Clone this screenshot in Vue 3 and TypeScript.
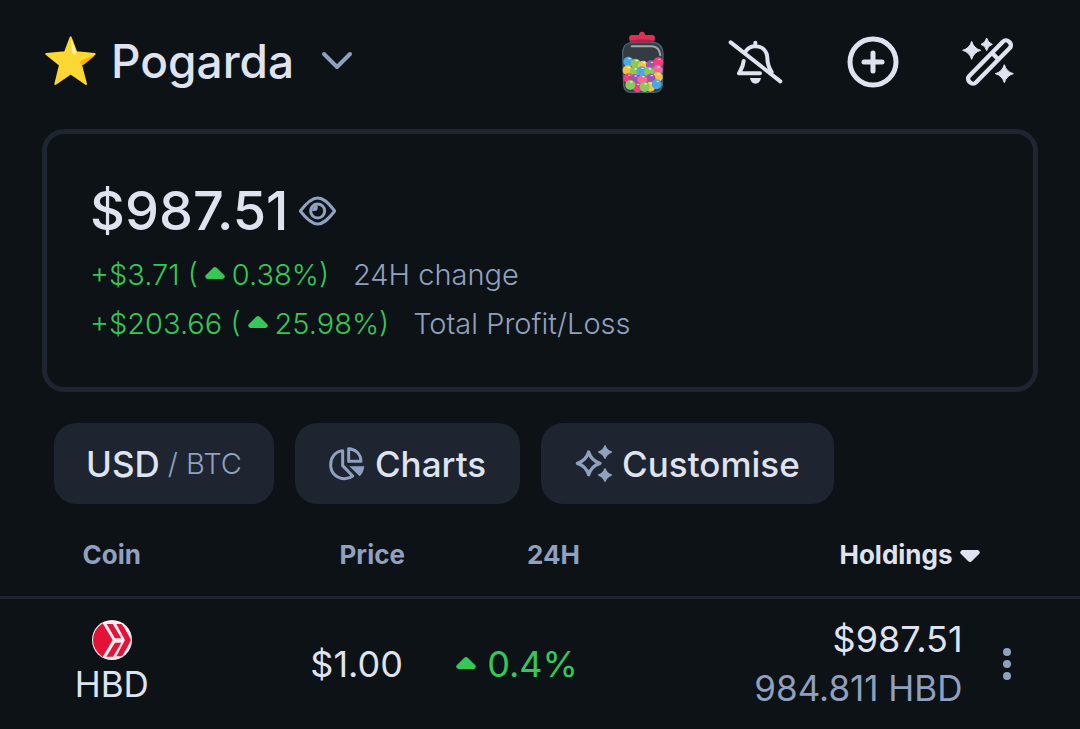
<script setup lang="ts">
import { ref } from 'vue'

interface Change { amount: string; percent: string; label: string }
interface Ball { x: number; y: number; c: string }

const changes: Change[] = [
  { amount: '+$3.71', percent: '0.38%', label: '24H change' },
  { amount: '+$203.66', percent: '25.98%', label: 'Total Profit/Loss' },
]

const balls: Ball[] = [
  { x: 88, y: 122, c: '#48a9e6' }, { x: 110, y: 128, c: '#8bc95a' }, { x: 132, y: 134, c: '#f6c445' },
  { x: 156, y: 133, c: '#9858b2' }, { x: 178, y: 124, c: '#ec4080' },
  { x: 86, y: 148, c: '#f6c445' }, { x: 107, y: 153, c: '#8bc95a' }, { x: 176, y: 147, c: '#f2699c' },
  { x: 128, y: 151, c: '#48a9e6' }, { x: 150, y: 153, c: '#8bc95a' },
  { x: 88, y: 172, c: '#ec4080' }, { x: 107, y: 174, c: '#9858b2' }, { x: 176, y: 168, c: '#f6c445' },
  { x: 155, y: 173, c: '#9858b2' }, { x: 130, y: 176, c: '#f2699c' },
  { x: 115, y: 199, c: '#ec4080' }, { x: 94, y: 192, c: '#8bc95a' }, { x: 154, y: 197, c: '#f6c445' },
  { x: 137, y: 198, c: '#8bc95a' }, { x: 173, y: 190, c: '#48a9e6' },
]

const hidden = ref(false)
</script>

<template>
  <main class="page">
    <header class="top">
      <button class="portfolio" type="button">
        <svg class="star" viewBox="45 47 153 150" aria-hidden="true">
          <path d="M122 51L139 96L194 101L153 134L168 191L122 159L76 191L90 134L49 101L105 96Z" fill="#fdd835" stroke="#fdd835" stroke-width="6" stroke-linejoin="round" />
          <path d="M123 60C127 58 132 76 138 96C136 105 127 103 126 97Z" fill="#fff59d" />
          <path d="M194 106L164 131C153 138 147 130 152 122Q160 116 194 106Z" fill="#f4b400" />
        </svg>
        <span>Pogarda</span>
        <svg class="chevron" viewBox="0 0 32 20" aria-hidden="true"><path d="M3 3L16 16L29 3" fill="none" stroke="#8fa1bf" stroke-width="4" stroke-linecap="round" stroke-linejoin="round" /></svg>
      </button>
      <nav class="actions" aria-label="Actions">
        <button type="button" aria-label="Rewards">
          <svg class="jar" viewBox="66 30 132 189">
            <path d="M94 65C75 69 70 83 71 101L74 193Q76 214 98 214H164Q188 214 190 192L192 99C192 79 183 67 164 64Z" fill="#343b43" stroke="#4b6472" stroke-width="4" />
            <g v-for="(b, i) in balls" :key="i">
              <circle :cx="b.x" :cy="b.y" r="15" :fill="b.c" />
              <ellipse :cx="b.x + 3" :cy="b.y - 9" rx="4" ry="2" fill="#fff" opacity=".8" />
            </g>
            <path d="M98 76H160Q181 78 184 103" fill="none" stroke="#a1a8ad" stroke-width="6" stroke-linecap="round" />
            <path d="M98 42H119Q121 32 129 32T139 42H160Q168 43 168 51L166 60Q130 66 92 60L90 50Q90 43 98 42Z" fill="#e22d55" />
            <path d="M92 59Q130 51 166 59V62Q129 67 92 62Z" fill="#b81f46" />
          </svg>
        </button>
        <button type="button" aria-label="Alerts off">
          <svg class="bell" viewBox="39 39 168 144" fill="none" stroke="#dfe3ef" stroke-width="12" stroke-linecap="round" stroke-linejoin="round">
            <path d="M47 52L196 169M121 53V63M92 79C102 65 112 64 121 64C143 64 156 78 157 99C157 120 163 130 170 141M86 108C84 127 79 132 72 145H135" />
            <path d="M105 159H138Q135 176 121 176Q108 176 105 159Z" fill="#dfe3ef" stroke="none" />
          </svg>
        </button>
        <button type="button" aria-label="Add transaction">
          <svg class="plus" viewBox="0 0 52 52" fill="none" stroke="#dfe3ef" stroke-width="5" stroke-linecap="round"><circle cx="26" cy="26" r="23" /><path d="M26 17V35M17 26H35" /></svg>
        </button>
        <button type="button" aria-label="Portfolio tools">
          <svg class="wand" viewBox="51 36 156 150" fill="#dfe3ef">
            <g transform="rotate(-45.5 133.5 111)" fill="none" stroke="#dfe3ef" stroke-width="13">
              <rect x="49" y="97" width="169" height="28" rx="12" /><path d="M158 97V125" />
            </g>
            <path d="M80 49Q86 70 107 76Q86 82 80 103Q74 82 53 76Q74 70 80 49ZM125 39Q129 54 142 58Q129 62 125 77Q121 62 108 58Q121 54 125 39ZM178 119Q184 140 205 146Q184 152 178 173Q172 152 151 146Q172 140 178 119Z" stroke="#dfe3ef" stroke-width="3" stroke-linejoin="round" />
          </svg>
        </button>
      </nav>
    </header>

    <section class="card" aria-label="Balance">
      <div class="balance">
        <span>{{ hidden ? '••••••' : '$987.51' }}</span>
        <button type="button" aria-label="Toggle balance" @click="hidden = !hidden">
          <svg class="eye" viewBox="807 230 111 90" fill="none" stroke="#8fa1bf" stroke-width="9">
            <path d="M811 275C834 245 848 236 863 236S891 245 914 275C891 305 878 314 863 314S834 305 811 275Z" stroke-linejoin="round" />
            <circle cx="863" cy="275" r="21" />
            <path d="M863 258V266Q863 275 854 275H846A17 17 0 0 1 863 258Z" fill="#8fa1bf" stroke="none" />
          </svg>
        </button>
      </div>
      <p v-for="c in changes" :key="c.label" class="change">
        <span class="gain">{{ c.amount }} (<svg class="up" viewBox="0 0 20 12" aria-hidden="true"><path d="M2 12Q-1 10 1 8L8 1Q10-1 12 1L19 8Q21 10 18 12Z" fill="#34c759" /></svg>{{ c.percent }})</span>
        <span class="label">{{ c.label }}</span>
      </p>
    </section>

    <div class="chips">
      <button class="chip currency" type="button"><span>USD</span><span class="alt">/ BTC</span></button>
      <button class="chip" type="button">
        <svg class="pie" viewBox="872 95 108 102" fill="none" stroke="#8fa1bf" stroke-width="9" aria-hidden="true">
          <path d="M913 106C891 107 877 127 877 148C877 174 896 190 919 190Q933 190 943 182L913 151Z" stroke-linejoin="round" />
          <path d="M931 100V138H968C967 115 951 101 931 100Z" stroke-linejoin="round" />
          <path d="M933 153H978Q976 172 964 183Z" fill="#8fa1bf" stroke="none" />
        </svg>
        <span>Charts</span>
      </button>
      <button class="chip" type="button">
        <svg class="sparkles" viewBox="165 90 111 111" fill="#8fa1bf" aria-hidden="true">
          <path d="M206 111Q214 137 240 145Q214 153 206 179Q198 153 172 145Q198 137 206 111Z" fill="none" stroke="#8fa1bf" stroke-width="10" stroke-linejoin="round" />
          <path d="M255 92Q260 106 274 111Q260 116 255 130Q250 116 236 111Q250 106 255 92ZM255 161Q260 175 274 180Q260 185 255 199Q250 185 236 180Q250 175 255 161Z" stroke="#8fa1bf" stroke-width="4" stroke-linejoin="round" />
        </svg>
        <span>Customise</span>
      </button>
    </div>

    <table class="coins">
      <colgroup><col class="c-coin" /><col class="c-price" /><col class="c-day" /><col class="c-hold" /><col class="c-menu" /></colgroup>
      <thead>
        <tr>
          <th class="coin" scope="col">Coin</th>
          <th scope="col">Price</th>
          <th scope="col">24H</th>
          <th class="sorted" scope="col" aria-sort="descending">Holdings<svg class="down" viewBox="0 0 20 12" aria-hidden="true"><path d="M2 0Q-1 2 1 4L8 11Q10 13 12 11L19 4Q21 2 18 0Z" fill="#dfe3ef" /></svg></th>
          <td></td>
        </tr>
      </thead>
      <tbody>
        <tr>
          <td class="coin">
            <svg class="logo" viewBox="96 269 120 120" aria-hidden="true">
              <circle cx="156" cy="329" r="60" fill="#fbeef2" />
              <path d="M128 279L158 329L128 380Q99 359 99 329T128 279ZM140 281H158L184 324H165ZM169 281H184Q191 286 213 329Q192 372 184 378H169L195 329ZM165 337H184L159 379H139Z" fill="#e31337" />
            </svg>
            <span>HBD</span>
          </td>
          <td class="num">$1.00</td>
          <td class="num day gain"><svg class="up" viewBox="0 0 20 12" aria-hidden="true"><path d="M2 12Q-1 10 1 8L8 1Q10-1 12 1L19 8Q21 10 18 12Z" fill="#34c759" /></svg>0.4%</td>
          <td class="num hold"><div>$987.51</div><div class="qty">984.811 HBD</div></td>
          <td class="menu">
            <button type="button" aria-label="HBD options"><svg class="dots" viewBox="0 0 8 32" fill="#8fa1bf"><circle cx="4" cy="4" r="4" /><circle cx="4" cy="16" r="4" /><circle cx="4" cy="28" r="4" /></svg></button>
          </td>
        </tr>
      </tbody>
    </table>
  </main>
</template>

<style>
body { background: #0d1217; }
</style>

<style scoped>
.page { font-family: Inter, "Liberation Sans", sans-serif; color: #dfe3ef; background: #0d1217; overflow: hidden; }
button { font: inherit; color: inherit; background: none; border: 0; padding: 0; display: flex; align-items: center; cursor: pointer; }
svg { display: block; flex: none; }
.top { display: flex; justify-content: space-between; align-items: center; height: 124px; padding: 0 66px 0 45px; }
.portfolio { font-size: 46px; font-weight: 500; line-height: 60px; gap: 15px; padding-bottom: 3px; }
.star { width: 51px; height: 50px; }
.chevron { width: 32px; height: 20px; margin-left: 12px; }
.actions { display: flex; align-items: center; gap: 63px; }
.jar { width: 44px; height: 63px; }
.bell { width: 56px; height: 48px; }
.plus { width: 52px; height: 52px; }
.wand { width: 52px; height: 50px; }
.card { margin: 5px 42px 0; border: 5px solid #1e2530; border-radius: 22px; padding: 43px 43px 39px; }
.balance { display: flex; align-items: center; gap: 10px; font-size: 54px; font-weight: 500; line-height: 68px; margin-bottom: 5px; }
.eye { width: 37px; height: 30px; }
.change { margin: 0; font-size: 29px; line-height: 49px; display: flex; gap: 24px; font-weight: 350; }
.label { color: #8fa1bf; }
.gain { color: #34c759; }
.up { display: inline-block; width: 20px; height: 12px; margin: 0 7px; vertical-align: 6px; }
.chips { display: flex; gap: 21px; margin: 31px 54px 0; }
.chip { height: 81px; padding: 0 34px; border-radius: 22px; background: #1e2530; font-size: 35px; font-weight: 500; gap: 10px; }
.currency { gap: 8px; padding: 0 32px; }
.alt { font-size: 29px; font-weight: 350; color: #8fa1bf; }
.pie { width: 36px; height: 34px; }
.sparkles { width: 37px; height: 37px; }
.coins { width: 100%; table-layout: fixed; border-collapse: collapse; font-size: 35px; }
.c-coin { width: 20.7%; }
.c-price { width: 16.8%; }
.c-day { width: 16.2%; }
.c-hold { width: 37%; }
.coins th, .coins td { padding: 0; text-align: right; }
.coins th { height: 93px; padding-top: 9px; box-sizing: border-box; font-size: 26px; font-weight: 700; color: #8fa1bf; }
.coins thead tr { border-bottom: 3px solid #1e2530; }
.coins .sorted { color: #dfe3ef; }
.down { display: inline-block; width: 20px; height: 12px; margin-left: 7px; vertical-align: 2px; }
.coins tbody td { height: 131px; line-height: 49px; }
.coins .coin { text-align: center; }
.logo { width: 40px; height: 40px; margin: 0 auto; }
.coins .num { font-size: 36px; padding-right: 2px; }
.day .up { margin-right: 11px; vertical-align: 8px; }
.coins .hold { padding-right: 17px; }
.coins .qty { font-size: 35px; color: #8fa1bf; }
.menu button { margin-left: 23px; }
.dots { width: 8px; height: 32px; }
</style>
